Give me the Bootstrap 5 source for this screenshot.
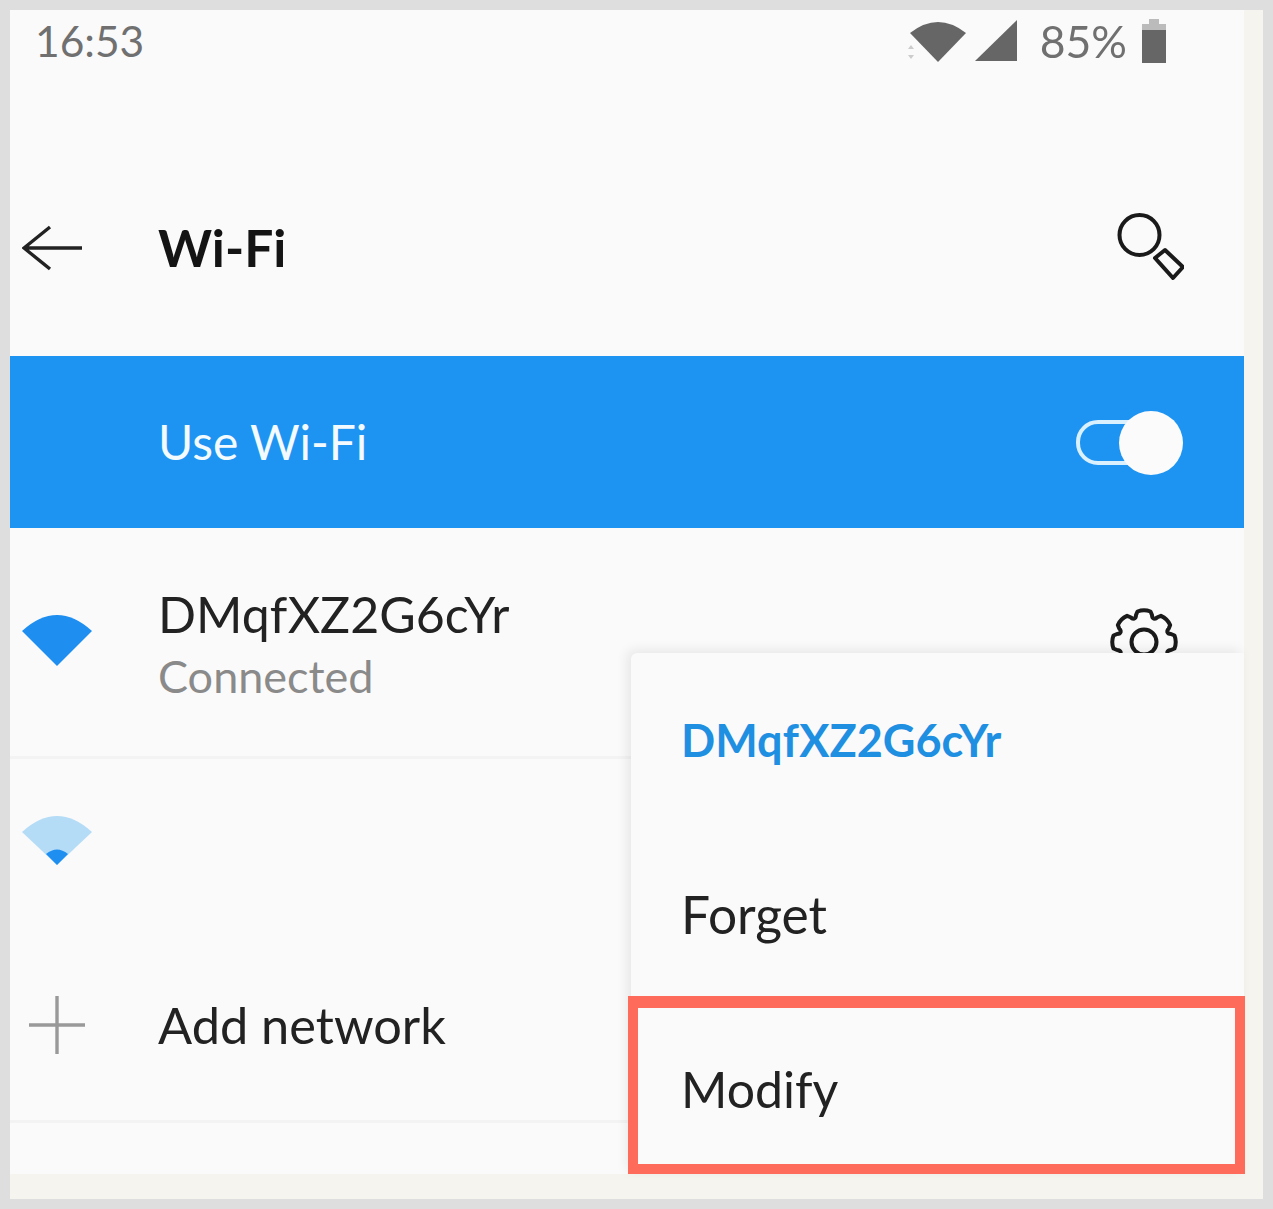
<!DOCTYPE html>
<html lang="en">
<head>
<meta charset="utf-8">
<title>Wi-Fi</title>
<link href="https://cdn.jsdelivr.net/npm/bootstrap@5.3.0/dist/css/bootstrap.min.css" rel="stylesheet">
<style>
html,body{height:100%}
body{background:#f5f4ef;font-family:"Lato","Noto Sans",sans-serif;color:#222;margin:0}
.frame{width:1273px;height:1209px;border:10px solid #dedede;background:#f5f4ef;padding:0 19px 25px 0}
.screen{height:100%;background:#fafafa;position:relative;filter:blur(.6px)}
.statusline{height:62px;padding:0 77px 0 25px;color:#707070;margin-bottom:68px}
.clock{font-size:42.5px}
.pct{margin:0 14px 0 22px;font-size:44.5px}
.toolline{height:216px;padding:0 60px 0 0}
.pagetitle{font-size:51.5px;font-weight:700;color:#141414;margin:0}
.slot{width:148px;flex:none;padding-left:12px}
.usebar{height:172px;background:#1e94f2;color:#f4fbff;font-size:48px;padding-right:59px}
.netrow{padding-right:65px;border-bottom:3px solid #f3f3f3}
.row-a{height:231px}
.row-b{height:171px;border-bottom:0}
.row-c{height:193px;padding-right:0}
.textblock{padding-top:5px}
.netname{font-size:50px;line-height:62px;color:#222}
.netsub{font-size:45px;line-height:62px;color:#8a8a8a}
.addlabel{font-size:50.5px;color:#222}
.plusslot{padding-left:19px}
.lift-one{margin-top:-2px}
.lift-two{margin-top:-5px}
.popmenu{position:absolute;left:621px;right:0;top:643px;bottom:0;background:#fafafa;border-radius:6px 0 0 0;box-shadow:-4px -3px 12px rgba(0,0,0,.08)}
.popmenu .list-group-item{background:transparent;border:0;padding:0 0 0 50px;height:174px;display:flex;align-items:center;font-size:50px;color:#222;border-radius:0}
.popmenu .poptitle{font-size:45px;font-weight:700;color:#1f8fe2;padding-top:2px}
.popmenu .forgetitem{font-size:51.5px;padding-top:2px}
.popmenu .modifyitem{padding-top:4px}
.redmark{position:absolute;left:-3px;right:-1px;top:343px;height:178px;border:10px solid #ff6b5b;border-top-width:12px;pointer-events:none}
</style>
</head>
<body>
<div class="frame">
  <div class="screen">
    <div class="statusline d-flex align-items-center">
      <span class="clock">16:53</span>
      <div class="ms-auto d-flex align-items-center">
        <svg width="60" height="44" viewBox="0 0 60 44"><path d="M4 14Q32 -8 60 14L32 43Z" fill="#666"/><path d="M2 30l3-4 3 4zM2 36l3 4 3-4z" fill="#ccc"/></svg>
        <svg class="ms-2" width="44" height="44" viewBox="0 0 44 44"><path d="M1 42L43 1V42Z" fill="#666"/></svg>
        <span class="pct">85%</span>
        <svg width="26" height="44" viewBox="0 0 26 44"><path d="M8 0H18V5H25V12H1V5H8Z" fill="#bbb"/><rect x="1" y="11" width="24" height="33" fill="#666"/></svg>
      </div>
    </div>
    <div class="toolline d-flex align-items-center">
      <div class="slot">
        <svg class="d-block" width="62" height="48" viewBox="0 0 62 48"><path d="M60 24H3M28 3L2 24L28 45" fill="none" stroke="#222" stroke-width="3.4"/></svg>
      </div>
      <h1 class="pagetitle">Wi-Fi</h1>
      <svg class="ms-auto" width="70" height="70" viewBox="0 0 70 70"><circle cx="25.5" cy="22" r="20" fill="none" stroke="#1a1a1a" stroke-width="4"/><path d="M41 45L51 37L69 54L59 65Z" fill="none" stroke="#1a1a1a" stroke-width="4" stroke-linejoin="round"/></svg>
    </div>
    <div class="usebar d-flex align-items-center">
      <div class="slot"></div>
      <span>Use Wi-Fi</span>
      <svg class="ms-auto" width="110" height="66" viewBox="0 -1 110 66"><rect x="3" y="12" width="80" height="41" rx="20" fill="none" stroke="#d9f0ff" stroke-width="4"/><circle cx="76" cy="33" r="32" fill="#fbfbfb"/></svg>
    </div>
    <div class="netrow row-a d-flex align-items-center">
      <div class="slot">
        <svg class="d-block lift-one" width="70" height="52" viewBox="0 0 70 52"><path d="M0 16Q35 -16 70 16L35 51Z" fill="#1e8ff0"/></svg>
      </div>
      <div class="textblock">
        <div class="netname">DMqfXZ2G6cYr</div>
        <div class="netsub">Connected</div>
      </div>
      <svg class="ms-auto" width="70" height="70" viewBox="-35 -35 70 70">
        <g fill="none" stroke="#1a1a1a" stroke-width="4" stroke-linejoin="round">
          <g id="tooth"><path d="M-10 -23.5Q-8 -24 -8 -27L-6.5 -30.5Q0 -33 6.5 -30.5L8 -27Q8 -24 10 -23.5"/></g>
          <use href="#tooth" transform="rotate(45)"/><use href="#tooth" transform="rotate(90)"/><use href="#tooth" transform="rotate(135)"/><use href="#tooth" transform="rotate(180)"/><use href="#tooth" transform="rotate(225)"/><use href="#tooth" transform="rotate(270)"/><use href="#tooth" transform="rotate(315)"/>
          <circle r="12.5"/>
        </g>
      </svg>
    </div>
    <div class="netrow row-b d-flex align-items-center">
      <div class="slot">
        <svg class="d-block lift-two" width="70" height="52" viewBox="0 0 70 52"><path d="M0 16Q35 -16 70 16L35 49Z" fill="#b5dcf6"/><path d="M24 38Q35 29 46 38L35 49Z" fill="#1e8ff0"/></svg>
      </div>
    </div>
    <div class="netrow row-c d-flex align-items-center">
      <div class="slot plusslot">
        <svg class="d-block" width="56" height="58" viewBox="0 0 56 58"><path d="M28 0V58M0 29H56" stroke="#999" stroke-width="3.4"/></svg>
      </div>
      <span class="addlabel">Add network</span>
    </div>
    <div class="popmenu list-group list-group-flush">
      <div class="list-group-item poptitle">DMqfXZ2G6cYr</div>
      <div class="list-group-item forgetitem">Forget</div>
      <div class="list-group-item modifyitem">Modify</div>
      <div class="redmark"></div>
    </div>
  </div>
</div>
<script src="https://cdn.jsdelivr.net/npm/bootstrap@5.3.0/dist/js/bootstrap.bundle.min.js"></script>
</body>
</html>
